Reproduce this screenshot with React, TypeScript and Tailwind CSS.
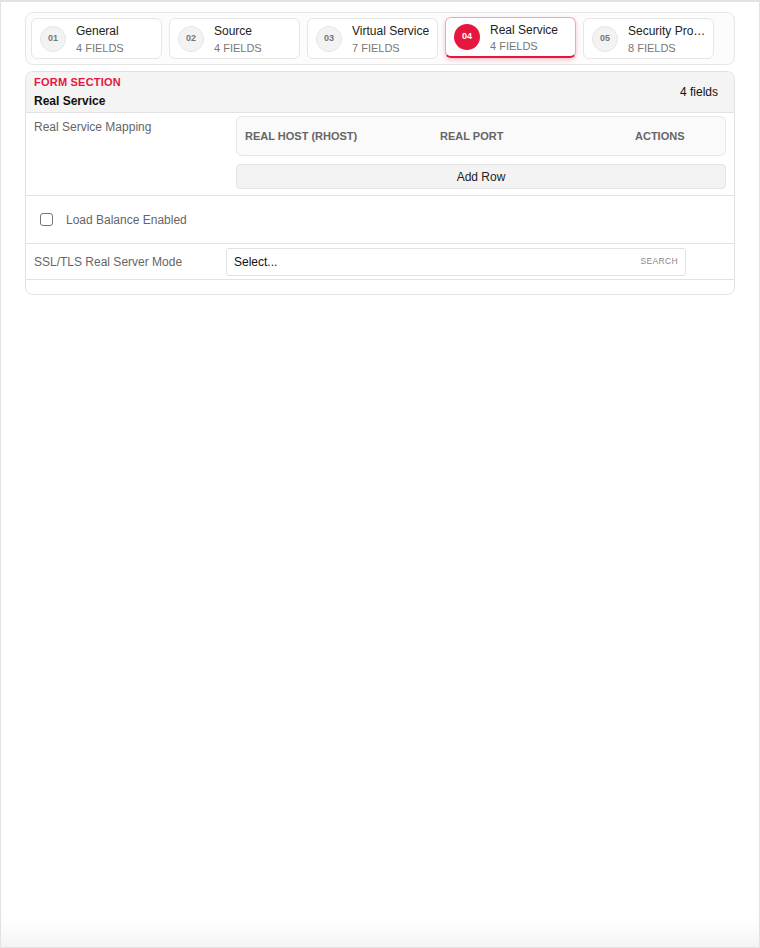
import React from "react";

const tabs = [
  { n: "01", title: "General", sub: "4 FIELDS" },
  { n: "02", title: "Source", sub: "4 FIELDS" },
  { n: "03", title: "Virtual Service", sub: "7 FIELDS" },
  { n: "04", title: "Real Service", sub: "4 FIELDS", active: true },
  { n: "05", title: "Security Profiles", sub: "8 FIELDS" },
];

function Tab({ t }: { t: (typeof tabs)[number] }) {
  if (t.active) {
    return (
      <div className="flex h-[41px] w-[131px] shrink-0 -translate-y-[1px] items-center rounded-[6px] border border-[#f2a7b3] border-b-2 border-b-[#e5173f] bg-white pl-[8px] pr-[6px] shadow-[0_2px_4px_rgba(229,23,63,0.25)]">
        <div className="flex h-[26px] w-[26px] shrink-0 items-center justify-center rounded-full bg-[#e5173f] text-[9px] font-bold text-white">
          {t.n}
        </div>
        <div className="ml-[10px] flex min-w-0 flex-col">
          <span className="truncate text-[12px] leading-[16px] text-[#222]">{t.title}</span>
          <span className="mt-[1px] truncate text-[11px] leading-[14px] text-[#777]">{t.sub}</span>
        </div>
      </div>
    );
  }
  return (
    <div className="flex h-[41px] w-[131px] shrink-0 items-center rounded-[6px] border border-[#e6e6e6] bg-white pl-[8px] pr-[6px]">
      <div className="flex h-[26px] w-[26px] shrink-0 items-center justify-center rounded-full border border-[#e6e6e6] bg-[#f3f3f3] text-[9px] font-bold text-[#777]">
        {t.n}
      </div>
      <div className="ml-[10px] flex min-w-0 flex-col">
        <span className="truncate text-[12px] leading-[16px] text-[#222]">{t.title}</span>
        <span className="mt-[2px] truncate text-[11px] leading-[14px] text-[#777]">{t.sub}</span>
      </div>
    </div>
  );
}

export default function App() {
  return (
    <div
      className="h-[948px] w-[760px] border border-t-2 border-[#e2e2e2] bg-white px-[24px] pt-[10px] shadow-[inset_0_-26px_22px_-14px_rgba(0,0,0,0.05)]"
      style={{ fontFamily: '"Liberation Sans", Arial, sans-serif' }}
    >
      <div className="flex gap-[7px] rounded-[8px] border border-[#e6e6e6] bg-[#fcfcfc] p-[5px]">
        {tabs.map((t) => (
          <Tab key={t.n} t={t} />
        ))}
      </div>

      <div className="mt-[6px] overflow-hidden rounded-[8px] border border-[#e2e2e2] bg-white">
        <div className="flex h-[40px] items-center justify-between bg-[#f4f4f4] pl-[8px] pr-[16px]">
          <div className="-mt-[1px] flex flex-col">
            <span className="text-[11px] font-bold leading-[14px] tracking-[0.02em] text-[#e5173f]">FORM SECTION</span>
            <span className="mt-[5px] text-[12px] font-bold leading-[14px] text-[#111]">Real Service</span>
          </div>
          <span className="text-[12px] text-[#111]">4 fields</span>
        </div>

        <div className="flex border-t border-[#e2e2e2] pb-[6px] pt-[3px]">
          <div className="w-[210px] shrink-0 pl-[8px] pt-[3px] text-[12px] leading-[16px] text-[#666]">
            Real Service Mapping
          </div>
          <div className="flex flex-1 flex-col pr-[8px]">
            <div className="grid h-[40px] grid-cols-[195px_195px_1fr] items-center rounded-[6px] border border-[#e6e6e6] bg-[#fafafa] px-[8px] text-[11px] font-bold text-[#666]">
              <span>REAL HOST (RHOST)</span>
              <span>REAL PORT</span>
              <span>ACTIONS</span>
            </div>
            <div className="mt-[8px] flex h-[25px] items-center justify-center rounded-[4px] border border-[#e4e4e4] bg-[#f3f3f3] text-[12px] leading-[14px] text-[#222]">
              Add Row
            </div>
          </div>
        </div>

        <div className="flex h-[48px] items-center border-t border-[#e2e2e2] pl-[14px]">
          <span className="h-[13px] w-[13px] rounded-[3px] border border-[#767676] bg-white" />
          <span className="ml-[13px] text-[12px] text-[#666]">Load Balance Enabled</span>
        </div>

        <div className="flex h-[36px] items-center border-t border-[#e2e2e2]">
          <div className="w-[200px] shrink-0 pl-[8px] text-[12px] text-[#666]">SSL/TLS Real Server Mode</div>
          <div className="flex h-[28px] w-[460px] items-center justify-between rounded-[3px] border border-[#e2e2e2] bg-white pl-[7px] pr-[7px]">
            <span className="text-[12px] text-[#111]">Select...</span>
            <span className="text-[8.5px] tracking-[0.04em] text-[#888]">SEARCH</span>
          </div>
        </div>

        <div className="h-[15px] border-t border-[#e2e2e2]" />
      </div>
    </div>
  );
}
